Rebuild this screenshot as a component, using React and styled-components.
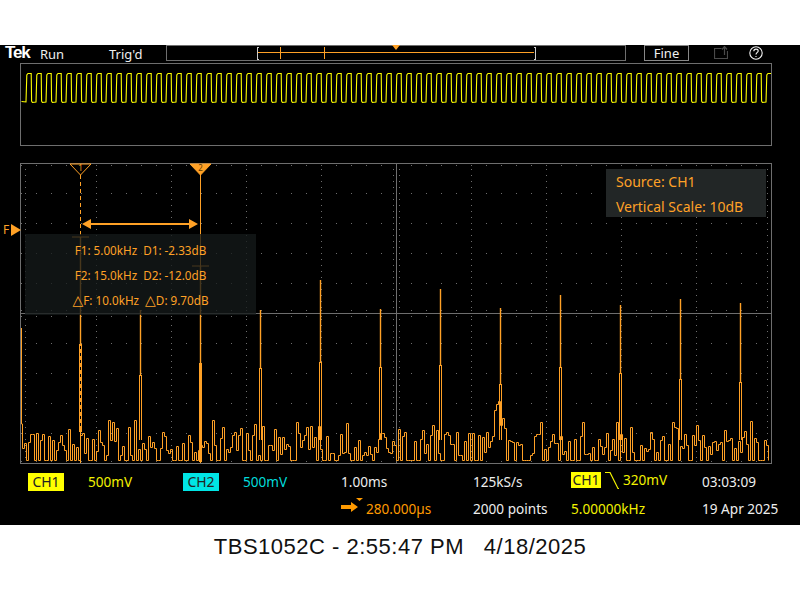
import styled, { createGlobalStyle } from 'styled-components'

const ORANGE = '#ffa126'
const GRID = '#6e6e6e'

const GlobalStyle = createGlobalStyle`
  html, body {
    margin: 0;
    padding: 0;
    background: #fff;
    font-family: "Noto Sans", sans-serif;
  }
`

const Page = styled.div`
  width: 800px;
  height: 600px;
  padding-top: 45px;
  box-sizing: border-box;
  overflow: hidden;
`

const Screen = styled.div`
  height: 480px;
  background: #000;
  display: flex;
  flex-direction: column;
`

const Header = styled.div`
  height: 16px;
  display: flex;
  align-items: center;
  color: #eee;
  font-size: 13px;
  line-height: 18px;
`

const Logo = styled.div`
  width: 35px;
  margin-left: 5px;
  font-family: "Liberation Sans", sans-serif;
  font-weight: 700;
  font-size: 17px;
  letter-spacing: -1.2px;
  color: #fff;
`

const HeaderLabel = styled.div`
  width: ${props => props.$width}px;
  padding-top: 2px;
`

const FineButton = styled.div`
  width: 45px;
  height: 16px;
  margin-left: 18px;
  box-sizing: border-box;
  border: 1px solid #888;
  color: #f0f0f0;
  font-size: 13px;
  line-height: 14px;
  text-align: center;
`

const HeaderIcons = styled.div`
  margin-left: 25px;
  display: flex;
  align-items: center;
  gap: 21px;
`

const Drawing = styled.svg`
  display: block;
`

const OverviewPanel = styled.div`
  width: 752px;
  height: 83px;
  margin: 2px 0 0 20px;
`

const PlotArea = styled.div`
  position: relative;
  width: 752px;
  height: 301px;
  margin: 17px 0 0 20px;
`

const TriggerFlag = styled.div`
  position: absolute;
  left: -17px;
  top: 61px;
  display: flex;
  align-items: center;
  gap: 2px;
  color: ${ORANGE};
  font-size: 12px;
  line-height: 12px;
`

const FlagArrow = styled.div`
  width: 0;
  height: 0;
  border-left: 10px solid ${ORANGE};
  border-top: 6px solid transparent;
  border-bottom: 6px solid transparent;
`

const CursorReadout = styled.div`
  position: absolute;
  left: 5px;
  top: 71px;
  width: 231px;
  height: 81px;
  box-sizing: border-box;
  padding-top: 4px;
  background: rgba(20, 26, 26, 0.78);
  color: ${ORANGE};
  font-size: 11.7px;
  line-height: 25px;
  text-align: center;
`

const ReadoutRow = styled.div`
  display: flex;
  justify-content: center;
  gap: 6px;
  white-space: pre;
`

const Delta = styled.span`
  font-family: "DejaVu Sans", sans-serif;
  font-size: 14px;
  line-height: 20px;
`

const ScaleBox = styled.div`
  position: absolute;
  left: 586px;
  top: 6px;
  width: 160px;
  height: 48px;
  box-sizing: border-box;
  padding-left: 10px;
  background: #222626;
  color: ${ORANGE};
  font-size: 14px;
  line-height: 25px;
`

const Footer = styled.div`
  flex: 1;
  display: grid;
  grid-template-columns: 60px 95px 60px 98px 132px 98px 131px 1fr;
  grid-template-rows: 27px 27px;
  align-items: center;
  padding: 4px 0 0 28px;
  font-size: 13.6px;
  color: #eee;
`

const Badge = styled.div`
  width: ${props => props.$width}px;
  height: ${props => props.$height}px;
  line-height: ${props => props.$height}px;
  background: ${props => props.$bg};
  color: #222;
  font-size: 14px;
  text-align: center;
`

const Reading = styled.div`
  color: ${props => props.$color || '#eee'};
  white-space: nowrap;
`

const TriggerCell = styled.div`
  display: flex;
  align-items: flex-start;
  height: 20px;
`

const TriggerLevel = styled.div`
  color: #f2f200;
  line-height: 16px;
  margin-left: 4px;
`

const OffsetCell = styled.div`
  grid-column: 5;
  display: flex;
  align-items: center;
  gap: 3px;
  color: #ff9a00;
`

const Caption = styled.div`
  height: 44px;
  font-family: "Liberation Sans", Arial, sans-serif;
  font-size: 22px;
  line-height: 44px;
  color: #111;
  text-align: center;
  white-space: pre;
  letter-spacing: 0.5px;
`

// seeded so that the trace stays the same between runs
const makeRandom = seed => () => {
  seed = (seed + 0x6d2b79f5) | 0
  let t = Math.imul(seed ^ (seed >>> 15), 1 | seed)
  t = (t + Math.imul(t ^ (t >>> 7), 61 | t)) ^ t
  return ((t ^ (t >>> 14)) >>> 0) / 4294967296
}

const PEAKS = [
  { x: 80.5, top: 237, inner: 344, thick: true },
  { x: 140.5, top: 310, inner: 375 },
  { x: 200.5, top: 266, inner: 363, thick: true },
  { x: 260.5, top: 310, inner: 368 },
  { x: 320.5, top: 280, inner: 362 },
  { x: 380.5, top: 309, inner: 367 },
  { x: 440.5, top: 289, inner: 365 },
  { x: 500.5, top: 308, inner: 384 },
  { x: 560.5, top: 295, inner: 367 },
  { x: 620.5, top: 305, inner: 373 },
  { x: 680.5, top: 299, inner: 379 },
  { x: 740.5, top: 303, inner: 382 }
]

const buildNoise = () => {
  const random = makeRandom(1052)
  let d = 'M21.5 328V424'
  for (let x = 22.5; x < 770; x += 2) {
    const r = random()
    let level
    if (r < 0.3) level = 460.5
    else if (r < 0.42) level = 420 + random() * 12
    else level = 432 + random() * 24
    if (x > 490 && x < 506) level -= 12 + (1 - Math.abs(x - 497) / 9) * 24
    if (level > 460.5) level = 460.5
    d += `H${x}V${Math.floor(level) + 0.5}`
  }
  return d
}

const buildSquareWave = () => {
  let d = 'M21.5 101.5'
  for (let x = 26; x < 766; x += 10) {
    d += `L${x} 102L${x + 0.8} 75L${x + 2} 73.5L${x + 5.2} 73.5L${x + 5.6} 101L${x + 6.4} 102.5`
  }
  d += 'L766 102L766.8 75L768 73.5L771 73.5'
  return d
}

const range = (from, to, step) => {
  const out = []
  for (let v = from; v <= to; v += step) out.push(v)
  return out
}

const Dots = ({ xs, ys }) => {
  let d = ''
  xs.forEach(x => ys.forEach(y => {
    d += `M${x} ${y}h1v1h-1z`
  }))
  return <path d={d} fill={GRID} shapeRendering="crispEdges" />
}

const Graticule = () => {
  const columns = range(96, 696, 75).filter(x => x !== 396)
  const rows = range(193, 433, 30).filter(y => y !== 313)
  const fine = range(21, 771, 15)
  const fineY = range(169, 457, 6)
  return (
    <g>
      <Dots xs={columns} ys={fineY} />
      <Dots xs={fine} ys={rows} />
      <Dots xs={fine} ys={[165, 461]} />
      <Dots xs={[25, 767]} ys={fineY} />
      <Dots xs={[393, 399]} ys={fineY} />
      <Dots xs={fine} ys={[310, 316]} />
      <path
        d="M20.5 463.5V163.5H771.5V463.5H20.5M20 313.5H771M396.5 163V463"
        fill="none"
        stroke={GRID}
        strokeWidth="1"
        shapeRendering="crispEdges"
      />
    </g>
  )
}

const Spectrum = () => (
  <g fill="none" stroke={ORANGE} strokeWidth="1">
    <path d={buildNoise()} />
    {PEAKS.map(p => (
      <g key={p.x}>
        <path d={`M${p.x} ${p.top}V${p.inner}`} strokeWidth="1.4" />
        {p.thick
          ? <path d={`M${p.x} ${p.inner}V${p.x < 100 ? 432 : 462}`} strokeWidth="3" />
          : <path d={`M${p.x - 1} 440V${p.inner}H${p.x + 1}V440`} strokeWidth="1" shapeRendering="crispEdges" />}
      </g>
    ))}
    <path d="M80.5 346V430" stroke="#000" strokeDasharray="3 4" />
  </g>
)

const Cursors = () => (
  <g>
    <path d="M80.5 175V344M80.5 432V463" stroke={ORANGE} strokeDasharray="4 3" fill="none" />
    <path d="M200.5 174V463" stroke={ORANGE} fill="none" />
    <path d="M72 237H89M192 266H209" stroke={ORANGE} fill="none" />
    <path d="M70 164H91L80.5 175Z" fill="#000" stroke={ORANGE} />
    <path d="M190 164H211L200.5 175Z" fill={ORANGE} stroke={ORANGE} />
    <text x="80.5" y="171" fontSize="8" fontFamily="Noto Sans" textAnchor="middle" fill={ORANGE}>1</text>
    <text x="200.5" y="171" fontSize="8" fontFamily="Noto Sans" textAnchor="middle" fill="#5a3800">2</text>
    <path d="M91 224H189" stroke={ORANGE} strokeWidth="2" />
    <path d="M82 224L91 219V229ZM198 224L189 219V229Z" fill={ORANGE} />
  </g>
)

const OverviewBar = () => (
  <Drawing width="460" height="16" viewBox="166 45 460 16">
    <rect x="166.5" y="45.5" width="459" height="15" fill="none" stroke={GRID} shapeRendering="crispEdges" />
    <path d="M259 47.5H257.5V59.5H259M533.5 47.5H535.5V59.5H533.5" fill="none" stroke="#ccc" shapeRendering="crispEdges" />
    <path d="M258 52.5H534M280.5 47V59M324.5 47V59" fill="none" stroke={ORANGE} shapeRendering="crispEdges" />
    <path d="M392 45H400L396 50Z" fill={ORANGE} />
  </Drawing>
)

const ExportIcon = () => (
  <Drawing width="14" height="14" viewBox="0 0 14 14">
    <path d="M7.5 2.5H0.5V12.5H13.5V5M10.5 9V1M8 3.5L10.5 0.5L13 3.5" fill="none" stroke="#4a4a4a" strokeWidth="1.2" />
  </Drawing>
)

const HelpIcon = () => (
  <Drawing width="14" height="14" viewBox="0 0 14 14">
    <circle cx="7" cy="7" r="6.2" fill="none" stroke="#f4f4f4" strokeWidth="1.1" />
    <path d="M4.8 5.2C4.8 3.8 5.8 3.1 7 3.1C8.3 3.1 9.2 3.9 9.2 5C9.2 6.4 7 6.6 7 8.6M7 10V11" fill="none" stroke="#f4f4f4" strokeWidth="1.1" />
  </Drawing>
)

const SlopeIcon = () => (
  <Drawing width="18" height="20" viewBox="0 0 18 20">
    <path d="M4 0.5H9L17 16.5H22" fill="none" stroke="#f2f200" strokeWidth="1.2" />
  </Drawing>
)

const OffsetArrow = () => (
  <Drawing width="22" height="22" viewBox="0 0 22 22">
    <path d="M0 7H10V4L17 9L10 14V11H0Z" fill="#ff9a00" />
    <path d="M15 0H22L18.5 3Z" fill="#ff9a00" />
  </Drawing>
)

export default function App() {
  return (
    <Page>
      <GlobalStyle />
      <Screen>
        <Header>
          <Logo>Tek</Logo>
          <HeaderLabel $width={69}>Run</HeaderLabel>
          <HeaderLabel $width={57}>Trig'd</HeaderLabel>
          <OverviewBar />
          <FineButton>Fine</FineButton>
          <HeaderIcons>
            <ExportIcon />
            <HelpIcon />
          </HeaderIcons>
        </Header>

        <OverviewPanel>
          <Drawing width="752" height="83" viewBox="20 63 752 83">
            <rect x="20.5" y="63.5" width="751" height="82" fill="none" stroke={GRID} shapeRendering="crispEdges" />
            <path d={buildSquareWave()} fill="none" stroke="#ffff00" strokeWidth="1.1" />
          </Drawing>
        </OverviewPanel>

        <PlotArea>
          <Drawing width="752" height="301" viewBox="20 163 752 301">
            <Graticule />
            <Spectrum />
            <Cursors />
          </Drawing>
          <TriggerFlag>
            <span>F</span>
            <FlagArrow />
          </TriggerFlag>
          <CursorReadout>
            <ReadoutRow>
              <span>F1: 5.00kHz</span>
              <span>D1: -2.33dB</span>
            </ReadoutRow>
            <ReadoutRow>
              <span>F2: 15.0kHz</span>
              <span>D2: -12.0dB</span>
            </ReadoutRow>
            <ReadoutRow>
              <span><Delta>△</Delta>F: 10.0kHz</span>
              <span><Delta>△</Delta>D: 9.70dB</span>
            </ReadoutRow>
          </CursorReadout>
          <ScaleBox>
            <div>Source: CH1</div>
            <div>Vertical Scale: 10dB</div>
          </ScaleBox>
        </PlotArea>

        <Footer>
          <Badge $width={36} $height={18} $bg="#ffff00">CH1</Badge>
          <Reading $color="#f2f200">500mV</Reading>
          <Badge $width={36} $height={18} $bg="#00e5e5">CH2</Badge>
          <Reading $color="#00dcdc">500mV</Reading>
          <Reading>1.00ms</Reading>
          <Reading>125kS/s</Reading>
          <TriggerCell>
            <Badge $width={30} $height={16} $bg="#ffff00">CH1</Badge>
            <SlopeIcon />
            <TriggerLevel>320mV</TriggerLevel>
          </TriggerCell>
          <Reading>03:03:09</Reading>

          <OffsetCell>
            <OffsetArrow />
            <span>280.000µs</span>
          </OffsetCell>
          <Reading>2000 points</Reading>
          <Reading $color="#f2f200">5.00000kHz</Reading>
          <Reading>19 Apr 2025</Reading>
        </Footer>
      </Screen>
      <Caption>TBS1052C - 2:55:47 PM   4/18/2025</Caption>
    </Page>
  )
}
